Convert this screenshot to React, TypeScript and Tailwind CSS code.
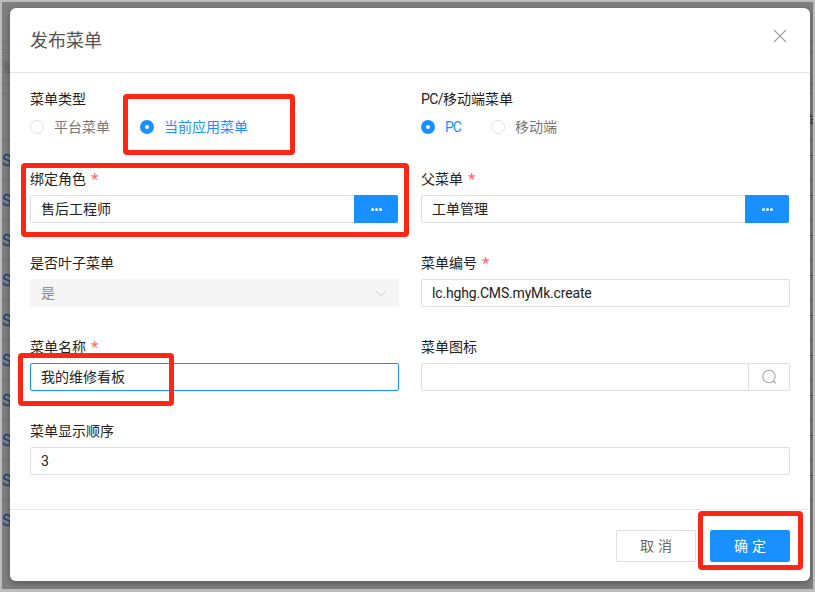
const rowsTop = Array.from({ length: 10 });
const rightTicks = Array.from({ length: 9 });

function Dots() {
  return (
    <span className="flex gap-[1px]">
      <span className="w-[3px] h-[3px] rounded-full bg-white" />
      <span className="w-[3px] h-[3px] rounded-full bg-white" />
      <span className="w-[3px] h-[3px] rounded-full bg-white" />
    </span>
  );
}

function Label({ text, required }: { text: string; required?: boolean }) {
  return (
    <div className="h-[22px] pt-[1px] leading-[22px] mb-[6px] text-[14px] text-[#222] flex">
      {text}
      {required && <span className="ml-[5px] text-[#ff6b6b] text-[17px]">*</span>}
    </div>
  );
}

function Radio({ label, checked, latin }: { label: string; checked?: boolean; latin?: boolean }) {
  return (
    <span className={`flex items-center text-[14px] ${checked ? "text-[#1890ff]" : "text-[#777]"}`}>
      {checked ? (
        <span className="w-[14px] h-[14px] rounded-full bg-[#1890ff] flex items-center justify-center mr-[10px]">
          <span className="w-[4px] h-[4px] rounded-full bg-white" />
        </span>
      ) : (
        <span className="w-[14px] h-[14px] rounded-full border border-[#dcdfe6] bg-white mr-[10px]" />
      )}
      <span className={latin ? "tracking-[-1px]" : ""}>{label}</span>
    </span>
  );
}

function TextBox({ value, focus, latin }: { value: string; focus?: boolean; latin?: boolean }) {
  return (
    <div
      className={`h-[28px] rounded-[2px] border bg-white pl-[10px] leading-[26px] text-[14px] text-[#222] ${
        focus ? "border-[#1890ff]" : "border-[#dcdfe6]"
      } ${latin ? "tracking-[-0.17px]" : ""}`}
    >
      {value}
    </div>
  );
}

function PickBox({ value }: { value: string }) {
  return (
    <div className="h-[28px] flex mr-[1px]">
      <div className="flex-1 rounded-l-[2px] border border-r-0 border-[#dcdfe6] bg-white pl-[10px] leading-[26px] text-[14px] text-[#222]">
        {value}
      </div>
      <div className="w-[44px] rounded-r-[2px] bg-[#1890ff] flex items-center justify-center">
        <Dots />
      </div>
    </div>
  );
}

function Mark({ className }: { className: string }) {
  return <div className={`absolute border-[5px] border-[#ff2616] rounded-[4px] ${className}`} />;
}

export default function App() {
  return (
    <div
      className="relative w-[815px] h-[592px] overflow-hidden bg-[#808080] border-2 border-b-[3px] border-[#bcbcbc]"
      style={{ fontFamily: 'Roboto, "Noto Sans CJK SC", "Liberation Sans", sans-serif' }}
    >
      <div className="pt-[39px]">
        <div className="h-[11px] border-t border-[#737373]" />
        <div className="h-[31px] border-t border-[#787878] pt-[7px] text-[12px] leading-[16px] text-[#6a6a6a]">量</div>
        <div className="h-[10px] border-t border-[#737373]" />
        <div className="h-[47px] border-t border-[#737373]" />
        {rowsTop.map((_, i) => (
          <div
            key={i}
            className="h-[40px] border-t border-[#737373] flex items-center text-[16px] text-[#123f80]"
          >
            S
          </div>
        ))}
      </div>

      <div className="absolute right-0 top-0 w-[3px] h-full overflow-hidden pt-[113px]">
        <div className="h-[40px] text-[12px] leading-[12px] text-[#333] -ml-[2px]">端</div>
        {rightTicks.map((_, i) => (
          <div key={i} className="h-[40px] border-t border-[#555]" />
        ))}
      </div>

      <div className="absolute left-[8px] top-[6px] w-[800px] h-[573px] rounded-[6px] bg-white flex flex-col shadow-[0_2px_8px_rgba(0,0,0,0.35)]">
        <div className="h-[65px] border-b border-[#e5e5e5] pl-[20px] pr-[23px] flex items-start justify-between">
          <span className="mt-[20px] text-[18px] leading-[26px] text-[#555]">发布菜单</span>
          <svg className="mt-[21px]" width="14" height="14" viewBox="0 0 14 14" fill="none" stroke="#9a9ea6" strokeWidth="1.1">
            <path d="M1 1 L13 13 M13 1 L1 13" />
          </svg>
        </div>

        <div className="flex-1 px-[20px] pt-[15px]">
          <div className="grid grid-cols-2 gap-x-[22px]">
            <div className="h-[79px]">
              <div className="h-[22px] leading-[22px] text-[14px] text-[#222]">菜单类型</div>
              <div className="flex mt-[6px] h-[22px] items-center gap-[30px]">
                <Radio label="平台菜单" />
                <Radio label="当前应用菜单" checked />
              </div>
            </div>
            <div className="h-[79px]">
              <div className="h-[22px] leading-[22px] text-[14px] text-[#222]">
                <span className="tracking-[-0.6px]">PC/</span>移动端菜单
              </div>
              <div className="flex mt-[6px] h-[22px] items-center gap-[30px]">
                <Radio label="PC" checked latin />
                <Radio label="移动端" />
              </div>
            </div>

            <div className="h-[84px]">
              <Label text="绑定角色" required />
              <PickBox value="售后工程师" />
            </div>
            <div className="h-[84px]">
              <Label text="父菜单" required />
              <PickBox value="工单管理" />
            </div>

            <div className="h-[84px]">
              <Label text="是否叶子菜单" />
              <div className="h-[28px] rounded-[2px] bg-[#f5f5f5] pl-[11px] pr-[12px] flex items-center justify-between text-[14px] text-[#8a8a8a]">
                是
                <svg width="12" height="7" viewBox="0 0 12 7" fill="none" stroke="#c8ccd4" strokeWidth="1">
                  <path d="M1 1 L6 6 L11 1" />
                </svg>
              </div>
            </div>
            <div className="h-[84px]">
              <Label text="菜单编号" required />
              <TextBox value="lc.hghg.CMS.myMk.create" latin />
            </div>

            <div className="h-[84px]">
              <Label text="菜单名称" required />
              <TextBox value="我的维修看板" focus />
            </div>
            <div className="h-[84px]">
              <Label text="菜单图标" />
              <div className="h-[28px] flex rounded-[2px] border border-[#dcdfe6] bg-white">
                <div className="flex-1 border-r border-[#dcdfe6]" />
                <div className="w-[40px] flex items-center justify-center">
                  <svg width="16" height="16" viewBox="0 0 16 16" fill="none" stroke="#a3a7ae" strokeWidth="1.1">
                    <circle cx="8" cy="7.5" r="6.2" />
                    <path d="M12.6 12 L15 14.4" />
                  </svg>
                </div>
              </div>
            </div>

            <div className="col-span-2">
              <Label text="菜单显示顺序" />
              <TextBox value="3" />
            </div>
          </div>
        </div>

        <div className="h-[72px] border-t border-[#e8e8e8] pr-[20px] pt-[20px] flex justify-end gap-[14px]">
          <div className="w-[80px] h-[32px] rounded-[2px] border border-[#dcdfe6] bg-white pl-[4px] text-[14px] tracking-[4px] text-[#666] flex items-center justify-center">
            取消
          </div>
          <div className="w-[80px] h-[32px] rounded-[2px] bg-[#1890ff] pl-[4px] text-[14px] tracking-[4px] text-white flex items-center justify-center">
            确定
          </div>
        </div>
      </div>

      <Mark className="left-[121px] top-[92px] w-[172px] h-[61px]" />
      <Mark className="left-[19px] top-[161px] w-[388px] h-[74px]" />
      <Mark className="left-[16px] top-[351px] w-[156px] h-[53px]" />
      <Mark className="left-[696px] top-[509px] w-[105px] h-[59px]" />
    </div>
  );
}
